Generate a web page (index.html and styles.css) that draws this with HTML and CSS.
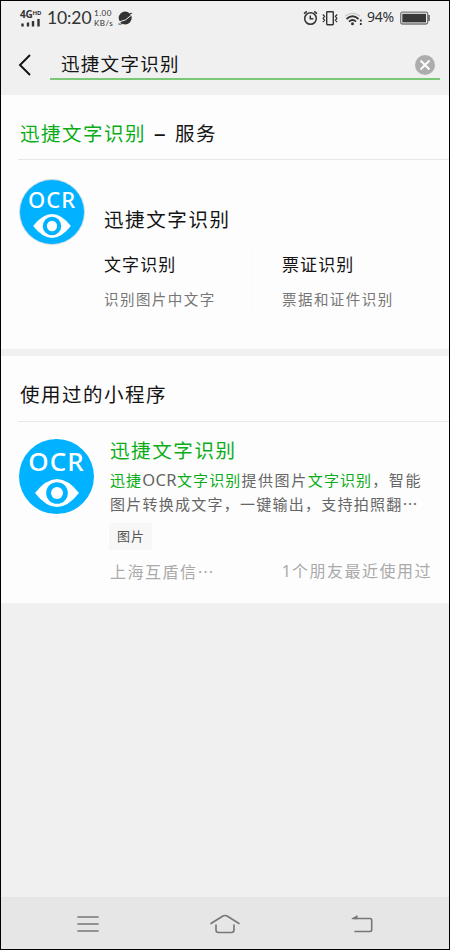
FILE: index.html
```html
<!DOCTYPE html>
<html lang="zh-CN">
<head>
<meta charset="utf-8">
<title>迅捷文字识别</title>
<link rel="stylesheet" href="styles.css">
</head>
<body>
<svg width="0" height="0" class="defs" aria-hidden="true">
  <symbol id="eye" viewBox="0 0 44 28">
    <path d="M0 14Q11 0 22 0T44 14Q33 28 22 28T0 14Z" fill="#fff"/>
    <circle cx="22" cy="14" r="10.800" fill="#00b2ff"/>
    <circle cx="22" cy="14" r="6" fill="#fff"/>
  </symbol>
</svg>
<div class="phone">
  <header class="status">
    <div class="signal">
      <div class="net">4G<small>HD</small></div>
      <svg width="20" height="8" viewBox="0 0 20 8"><path d="M1.500 4.500v3M7 3.500v4M12 2v5.500M17.500 0v7.500" stroke="#333" stroke-width="2.400"/></svg>
    </div>
    <span class="time">10:20</span>
    <div class="speed"><div>1.00</div><div>KB/s</div></div>
    <svg class="planet" width="15" height="14" viewBox="0 0 15 14"><circle cx="7.200" cy="7" r="6.500" fill="#333"/><path d="M1 11Q8 10 13.500 4" fill="none" stroke="#f0f0f0" stroke-width="1"/><path d="M.5 13q2 .5 4-.5M12 2.500q2-.8 2 .5" fill="none" stroke="#333"/></svg>
    <div class="right">
      <svg width="15" height="16" viewBox="0 0 15 16" fill="none" stroke="#333" stroke-width="1.500"><circle cx="7.500" cy="8.500" r="5.800"/><path d="M7.300 5.500v3.200h3M1 3.600L3.800 1.300M14 3.600L11.200 1.300"/></svg>
      <svg class="vibrate" width="16" height="16" viewBox="0 0 16 16" fill="none" stroke="#333" stroke-width="1.400"><rect x="4.700" y="1.700" width="6.600" height="13" rx=".7"/><path d="M.8 4.500l1.800 1.800-1.500 2 1.500 2-1.800 1.800M15.200 4.500l-1.800 1.800 1.500 2-1.500 2 1.800 1.800" stroke-width="1.200"/></svg>
      <svg class="wifi" width="18" height="14" viewBox="0 0 18 14" fill="none" stroke="#333" stroke-width="1.800"><path d="M0 4.300Q7.500-1.800 15 4.300" stroke="#c4c4c4" stroke-width="1.200"/><path d="M1.500 7Q7.500 1.600 13.500 7M4 9.600Q7.500 6.500 11 9.600"/><circle cx="7.500" cy="11.700" r="1.500" fill="#333" stroke="none"/><path d="M15.800 7.500v2M15.800 11v2"/></svg>
      <span class="pct">94%</span>
      <svg width="31" height="14" viewBox="0 0 31 14"><rect x=".7" y="1.200" width="27" height="11.800" rx="1.800" fill="#f0f0f0" stroke="#777" stroke-width="1.300"/><path d="M2.300 2.800h23.700v8.600H2.300z" fill="#383838"/><path d="M29 4v6" stroke="#666" stroke-width="1.700"/></svg>
    </div>
  </header>
  <div class="search">
    <svg class="back" width="14" height="22" viewBox="0 0 14 22"><path d="M12 1L2 11l10 10" fill="none" stroke="#111" stroke-width="1.900"/></svg>
    <div class="field">
      <span class="query">迅捷文字识别</span>
      <svg class="clear" width="20" height="20" viewBox="0 0 20 20"><circle cx="10" cy="10" r="10" fill="#adadad"/><path d="M5.500 5.500l9 9M14.500 5.500l-9 9" stroke="#fff" stroke-width="1.900"/></svg>
    </div>
  </div>
  <main>
    <section class="card service">
      <h2 class="heading"><b>迅捷文字识别</b><i>–</i>服务</h2>
      <div class="body">
        <div class="logo small"><span>OCR</span><svg><use href="#eye"/></svg></div>
        <div class="info">
          <h3 class="name">迅捷文字识别</h3>
          <div class="links">
            <div class="link"><h4>文字识别</h4><p>识别图片中文字</p></div>
            <div class="link second"><h4>票证识别</h4><p>票据和证件识别</p></div>
          </div>
        </div>
      </div>
    </section>
    <section class="card used">
      <h2 class="heading">使用过的小程序</h2>
      <div class="body">
        <div class="logo"><span>OCR</span><svg><use href="#eye"/></svg></div>
        <div class="info">
          <h3 class="name green">迅捷文字识别</h3>
          <p class="desc"><b>迅捷</b><span class="latin">OCR</span><b>文字识别</b>提供图片<b>文字识别</b>，智能<br><span class="line2">图片转换成文字，一键输出，支持拍照翻<span class="dots">⋯</span></span></p>
          <span class="tag">图片</span>
          <div class="meta"><span>上海互盾信<span class="dots">⋯</span></span><span class="friends"><span class="one">1</span>个朋友最近使用过</span></div>
        </div>
      </div>
    </section>
  </main>
  <nav>
    <svg width="22" height="18" viewBox="0 0 22 18"><path d="M1 2h20M1 9h20M1 16h20" stroke="#777" stroke-width="1.600" stroke-linecap="round"/></svg>
    <svg width="30" height="20" viewBox="0 0 30 20" fill="none" stroke="#777" stroke-width="1.600" stroke-linecap="round"><path d="M1 9.500L12.500 2.300Q15 .8 17.500 2.300L29 9.500M6 11v5q0 2.500 2.500 2.500h13q2.500 0 2.500-2.500v-5"/></svg>
    <svg width="22" height="20" viewBox="0 0 22 20"><path d="M2 4.500h17q1.700 0 1.700 1.700v9.600q0 1.700-1.700 1.700H4" fill="none" stroke="#777" stroke-width="1.600" stroke-linecap="round"/><path d="M0 5L6.500 1v4.300z" fill="#777"/></svg>
  </nav>
</div>
</body>
</html>
```
FILE: styles.css
```css
* { box-sizing: border-box; margin: 0; padding: 0; }
body { font-family: "Noto Sans", "Noto Sans CJK SC", sans-serif; color: #141414; }
h2, h3, h4 { font-weight: 400; }
svg { display: block; flex: none; }
.defs { position: absolute; }
.phone {
  width: 450px; height: 950px; border: 1px solid #000;
  background: #f0f0f0; display: flex; flex-direction: column; overflow: hidden;
  white-space: nowrap;
}

.status { height: 34px; padding: 0 18px 0 19px; display: flex; align-items: center; color: #333; flex: none; }
.signal { width: 23px; }
.net { font: 700 10px/9px "Noto Sans", sans-serif; display: flex; letter-spacing: -.2px; }
.net small { font-size: 6px; line-height: 6px; }
.signal svg { margin: 0 0 0 1px; }
.time { font: 17.500px/20px Lato, sans-serif; margin-left: 4px; width: 47px; letter-spacing: -.1px; }
.speed { font: 8px/10px Lato, sans-serif; letter-spacing: .5px; width: 24px; }
.right { margin-left: auto; display: flex; align-items: center; }
.vibrate { margin-left: 4px; }
.wifi { margin: 1px 0 0 7px; }
.pct { font: 14px/18px "Noto Sans", sans-serif; margin: -2px 5px 0 4px; width: 28px; letter-spacing: -.2px; }

.search { height: 60px; display: flex; padding: 0 9px 0 17px; flex: none; }
.back { margin-top: 19px; }
.field { flex: 1; margin-left: 18px; height: 45px; border-bottom: 2px solid #79c875; padding: 15px 5px 0 11px; display: flex; justify-content: space-between; align-items: center; }
.query { font-size: 18.500px; line-height: 28px; letter-spacing: 1.300px; }
.clear { margin-top: 2px; }

.card { background: #fdfdfd; }
.service { height: 254px; margin-bottom: 7px; }
.used { height: 247px; }
.heading { height: 65px; margin-left: 17px; padding-left: 2px; border-bottom: 1px solid #e8e8e8; font-size: 19.500px; line-height: 78px; letter-spacing: 1.500px; }
.heading b, .green, .desc b { color: #0aad17; font-weight: 400; }
.heading i { font: 24px/20px "Noto Sans", sans-serif; display: inline-block; width: 29px; text-align: center; }
.used .heading { height: 66px; }
.body { display: flex; padding-left: 18px; }
.logo { width: 75px; height: 75px; border-radius: 50%; background: #00b2ff; color: #fff; margin-top: 17px; display: flex; flex-direction: column; align-items: center; flex: none; }
.logo span { font: 500 26px/25px "Noto Sans", sans-serif; padding-top: 10px; height: 40px; letter-spacing: 1px; }
.logo svg { width: 44px; height: 28px; }
.small { width: 66px; height: 66px; margin-top: 19px; border: 1px solid #d3dce0; }
.small span { font-size: 22px; line-height: 21px; padding-top: 9px; height: 34px; }
.small svg { width: 38px; height: 24px; }
.service .info { padding: 46px 0 0 19px; }
.name { font-size: 19.500px; line-height: 28px; letter-spacing: 1.600px; }
.links { display: flex; margin-top: 17px; }
.link { width: 149px; height: 58px; border-right: 1px solid #fafafa; }
.second { padding-left: 29px; border: 0; }
.link h4 { font-size: 17px; line-height: 28px; letter-spacing: 1.100px; }
.link p { font-size: 14.500px; line-height: 20px; letter-spacing: 1.450px; margin-top: 10px; color: #777; }
.used .info { padding: 16px 0 0 16px; flex: 1; }
.used .name { line-height: 26px; }
.desc { font-size: 15px; line-height: 23px; letter-spacing: 1.600px; color: #666; margin-top: 5px; }
.desc b { letter-spacing: 1.100px; }
.latin { font-size: 16.500px; line-height: 20px; letter-spacing: .4px; }
.line2 { letter-spacing: 1.250px; }
.dots { font-family: "Noto Sans CJK SC", sans-serif; }
.tag { display: block; width: 43px; height: 27px; background: #f7f7f7; margin: 7px 0 0 -1px; padding-left: 8px; font-size: 13px; line-height: 26px; letter-spacing: 1px; color: #555; }
.meta { display: flex; justify-content: space-between; padding-right: 17px; margin-top: 9px; font-size: 16px; line-height: 24px; letter-spacing: 1.500px; color: #aaa; }
.one { letter-spacing: 1px; }

nav { margin-top: auto; height: 52px; background: #e6e6e6; display: flex; align-items: center; justify-content: space-between; padding: 1px 76px 0 76px; flex: none; }
```
